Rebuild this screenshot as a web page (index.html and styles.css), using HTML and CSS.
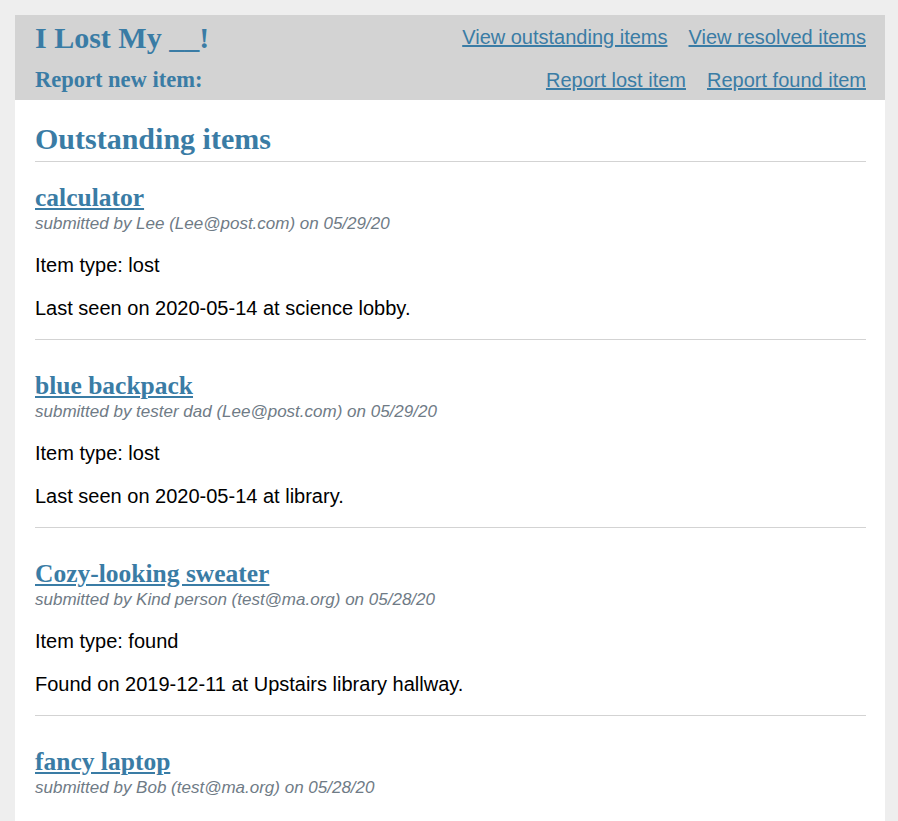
FILE: index.html
```html
<!DOCTYPE html>
<html>
<head>
<meta charset="utf-8">
<title>I Lost My __!</title>
<link rel="stylesheet" href="styles.css">
</head>
<body>
<div class="page">
  <header class="header">
    <div class="row row1">
      <h1 class="site-title">I Lost My __!</h1>
      <nav class="links">
        <a href="#">View outstanding items</a>
        <a href="#">View resolved items</a>
      </nav>
    </div>
    <div class="row row2">
      <h3 class="report">Report new item:</h3>
      <nav class="links">
        <a href="#">Report lost item</a>
        <a href="#">Report found item</a>
      </nav>
    </div>
  </header>
  <main class="content">
    <h2 class="section-title">Outstanding items</h2>
    <article class="item">
      <h3 class="item-title"><a href="#">calculator</a></h3>
      <div class="meta">submitted by Lee (Lee@post.com) on 05/29/20</div>
      <p>Item type: lost</p>
      <p>Last seen on 2020-05-14 at science lobby.</p>
    </article>
    <article class="item">
      <h3 class="item-title"><a href="#">blue backpack</a></h3>
      <div class="meta">submitted by tester dad (Lee@post.com) on 05/29/20</div>
      <p>Item type: lost</p>
      <p>Last seen on 2020-05-14 at library.</p>
    </article>
    <article class="item">
      <h3 class="item-title"><a href="#">Cozy-looking sweater</a></h3>
      <div class="meta">submitted by Kind person (test@ma.org) on 05/28/20</div>
      <p>Item type: found</p>
      <p>Found on 2019-12-11 at Upstairs library hallway.</p>
    </article>
    <article class="item">
      <h3 class="item-title"><a href="#">fancy laptop</a></h3>
      <div class="meta">submitted by Bob (test@ma.org) on 05/28/20</div>
      <p>Item type: lost</p>
      <p>Last seen on 2020-05-10 at cafeteria.</p>
    </article>
  </main>
</div>
</body>
</html>
```

FILE: styles.css
```css
html, body {
  margin: 0;
  padding: 0;
}
body {
  background: #eeeeee;
  font-family: "Liberation Sans", Arial, sans-serif;
  font-size: 20px;
  color: #000;
  padding: 15px 0 0 15px;
}
.page {
  background: #ffffff;
  width: 870px;
}
.header {
  background: #d3d3d3;
  padding: 0 19px 0 20px;
}
.row {
  display: flex;
  justify-content: space-between;
  align-items: center;
}
.row1 {
  height: 45px;
}
.row2 {
  height: 40px;
}
.site-title {
  margin: 0;
  font-family: "Liberation Serif", "Times New Roman", serif;
  font-size: 30px;
  line-height: 34px;
  font-weight: bold;
  color: #3a7ca5;
}
.report {
  margin: 0;
  font-family: "Liberation Serif", "Times New Roman", serif;
  font-size: 22.5px;
  line-height: 26px;
  font-weight: bold;
  color: #3a7ca5;
}
.links {
  display: flex;
  gap: 21px;
}
.links a {
  color: #3a7ca5;
  font-size: 20px;
  line-height: 24px;
  text-decoration: underline;
}
.row1 .links {
  margin-bottom: 2px;
}
.content {
  padding: 21px 19px 20px 20px;
}
.section-title {
  margin: 0;
  padding: 0 0 4px 0;
  font-family: "Liberation Serif", "Times New Roman", serif;
  font-size: 30px;
  line-height: 36px;
  font-weight: bold;
  color: #3a7ca5;
  border-bottom: 1px solid #d3d3d3;
}
.item {
  border-bottom: 1px solid #d3d3d3;
  padding-top: 31px;
}
.section-title + .item {
  padding-top: 21px;
}
.item-title {
  margin: 0;
  font-family: "Liberation Serif", "Times New Roman", serif;
  font-size: 25.5px;
  font-weight: bold;
  line-height: 30px;
}
.item-title a {
  color: #3a7ca5;
  text-decoration: underline;
}
.meta {
  font-style: italic;
  font-size: 17px;
  color: #6f7b86;
  line-height: 21px;
}
.item p {
  margin: 19px 0;
  line-height: 24px;
}
```
